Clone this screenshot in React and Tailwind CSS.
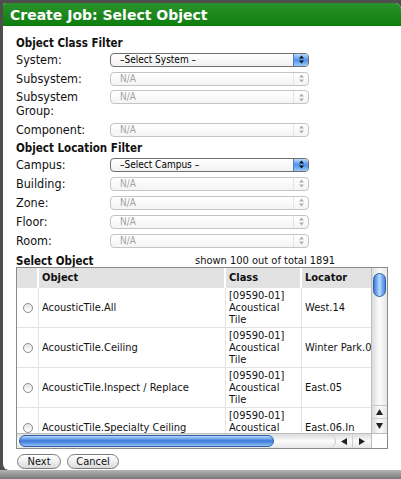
import React from 'react';

const sans = "font-['DejaVu_Sans_Condensed','DejaVu_Sans',sans-serif]";

const Arrows = ({ color = '#9a9a9a' }) => (
  <svg width="5" height="9" viewBox="0 0 5 9">
    <polygon points="0,3.5 2.5,0.5 5,3.5" fill={color} />
    <polygon points="0,5.5 2.5,8.5 5,5.5" fill={color} />
  </svg>
);

const Select = ({ value, active }) => (
  <div
    className={
      active
        ? 'h-[14px] w-[199px] shrink-0 rounded-[4px] border border-[#6f6f6f] bg-gradient-to-b from-white to-[#f1f1f1] flex items-center overflow-hidden text-black'
        : 'h-[14px] w-[199px] shrink-0 rounded-[4px] border border-[#c4c4c4] bg-gradient-to-b from-white to-[#f4f4f4] flex items-center overflow-hidden text-[#a2a2a2]'
    }
  >
    <span className="flex-1 pl-[9px] text-[10px] leading-none">{value}</span>
    {active ? (
      <div className="w-[15px] h-full border-l border-[#4a7fc8] bg-gradient-to-b from-[#b9dafc] via-[#4d92ea] to-[#9cc9f8] flex items-center justify-center">
        <Arrows color="#111" />
      </div>
    ) : (
      <div className="w-[15px] h-full border-l border-[#e4e4e4] flex items-center justify-center">
        <Arrows color="#b0b0b0" />
      </div>
    )}
  </div>
);

const FieldRow = ({ label, value, active }) => (
  <div className="h-[19px] flex items-center">
    <span className="w-[94px] text-[12.5px] leading-[14px] text-[#111]">{label}</span>
    <Select value={value} active={active} />
  </div>
);

const Heading = ({ children, className = '' }) => (
  <div className={`text-[11.5px] font-bold leading-[14px] text-[#111] ${className}`}>{children}</div>
);

const Radio = () => (
  <span className="block w-[10px] h-[10px] rounded-full border border-[#8c8c8c] bg-gradient-to-b from-[#e4e4e4] to-white" />
);

const rows = [
  { object: 'AcousticTile.All', locator: 'West.14' },
  { object: 'AcousticTile.Ceiling', locator: 'Winter Park.01' },
  { object: 'AcousticTile.Inspect / Replace', locator: 'East.05' },
  { object: 'AcousticTile.Specialty Ceiling', locator: 'East.06.In' },
];

const VScrollbar = () => (
  <div className="w-[16px] h-full border-l border-[#bdbdbd] bg-gradient-to-r from-[#dcdcdc] via-[#fbfbfb] to-[#e6e6e6] flex flex-col">
    <div className="px-[1px] pt-[5px]">
      <div className="h-[24px] w-[13px] rounded-full border border-[#2f5fa8] bg-gradient-to-r from-[#3b78d8] via-[#b6dafd] to-[#3f82e2]" />
    </div>
    <div className="flex-1" />
    <div className="h-[1px] bg-[#c8c8c8]" />
    <div className="h-[13px] flex items-center justify-center border-b border-[#d0d0d0]">
      <svg width="7" height="6" viewBox="0 0 7 6"><polygon points="0,6 3.5,0 7,6" fill="#222" /></svg>
    </div>
    <div className="h-[14px] flex items-center justify-center">
      <svg width="7" height="6" viewBox="0 0 7 6"><polygon points="0,0 3.5,6 7,0" fill="#222" /></svg>
    </div>
  </div>
);

const HScrollbar = () => (
  <div className="h-[15px] flex border-t border-[#bdbdbd]">
    <div className="flex-1 flex bg-gradient-to-b from-[#dcdcdc] via-[#fbfbfb] to-[#e6e6e6]">
      <div className="flex-1 flex items-center pl-[2px] border-r border-[#c8c8c8] rounded-r-full">
        <div className="h-[12px] w-[255px] rounded-full border border-[#2f5fa8] bg-gradient-to-b from-[#b6dafd] via-[#3b78d8] to-[#8fc0f7]" />
      </div>
      <div className="w-[17px] flex items-center justify-center border-r border-[#d0d0d0]">
        <svg width="6" height="7" viewBox="0 0 6 7"><polygon points="6,0 0,3.5 6,7" fill="#222" /></svg>
      </div>
      <div className="w-[18px] flex items-center justify-center">
        <svg width="6" height="7" viewBox="0 0 6 7"><polygon points="0,0 6,3.5 0,7" fill="#222" /></svg>
      </div>
    </div>
    <div className="w-[16px] bg-white border-l border-[#bdbdbd]" />
  </div>
);

const ObjectTable = () => (
  <div className="h-[182px] border border-[#8a8a8a] flex flex-col">
    <div className="h-[165px] flex overflow-hidden">
      <div className="flex-1 overflow-hidden">
        <div className="h-[20px] flex bg-[#e2e2e2] text-[11px] font-bold leading-[20px] text-[#111]">
          <div className="w-[22px] border-r-2 border-white" />
          <div className="w-[187px] border-r-2 border-white pl-[3px]">Object</div>
          <div className="w-[76px] border-r-2 border-white pl-[3px]">Class</div>
          <div className="flex-1 pl-[3px]">Locator</div>
        </div>
        {rows.map((r) => (
          <div key={r.object} className="h-[40px] flex border-b border-[#e4e4e4] text-[11px] text-[#111]">
            <div className="w-[22px] border-r border-[#e4e4e4] flex items-center justify-center">
              <Radio />
            </div>
            <div className="w-[187px] border-r border-[#e4e4e4] pl-[3px] flex items-center leading-[12px]">{r.object}</div>
            <div className="w-[76px] border-r border-[#e4e4e4] pl-[3px] pt-[2px] leading-[12px]">
              <div>[09590-01]</div>
              <div>Acoustical</div>
              <div>Tile</div>
            </div>
            <div className="flex-1 pl-[3px] flex items-center leading-[12px] whitespace-nowrap overflow-hidden">{r.locator}</div>
          </div>
        ))}
      </div>
      <VScrollbar />
    </div>
    <HScrollbar />
  </div>
);

const Button = ({ children, w }) => (
  <button
    className={`${w} h-[15px] rounded-full border border-[#7d7d7d] bg-gradient-to-b from-white via-[#f0f0f0] to-[#dadada] text-[11px] leading-none text-[#111]`}
  >
    {children}
  </button>
);

export default function App() {
  return (
    <div className={`w-[401px] h-[479px] overflow-hidden bg-[#4e4e4e] flex flex-col ${sans}`}>
      <div className="pl-[3px] pt-[3px]">
        <div className="h-[467px] bg-white rounded-tl-[3px] rounded-tr-[6px] rounded-bl-[6px] overflow-hidden flex flex-col">
          <div className="h-[23px] shrink-0 bg-gradient-to-b from-[#2a922a] to-[#0c7d0c] flex items-center pl-[7px]">
            <span className="font-['DejaVu_Sans',sans-serif] text-[14px] font-bold text-white leading-none">
              Create Job: Select Object
            </span>
          </div>
          <div className="px-[13px] pt-[10px] flex flex-col">
            <Heading>Object Class Filter</Heading>
            <FieldRow label="System:" value="–Select System –" active />
            <FieldRow label="Subsystem:" value="N/A" />
            <div className="h-[32px] flex items-start pt-[2px]">
              <span className="w-[94px] text-[12.5px] leading-[14px] text-[#111]">
                Subsystem
                <br />
                Group:
              </span>
              <Select value="N/A" />
            </div>
            <FieldRow label="Component:" value="N/A" />
            <Heading className="h-[16px] pt-[2px]">Object Location Filter</Heading>
            <FieldRow label="Campus:" value="–Select Campus –" active />
            <FieldRow label="Building:" value="N/A" />
            <FieldRow label="Zone:" value="N/A" />
            <FieldRow label="Floor:" value="N/A" />
            <FieldRow label="Room:" value="N/A" />
            <div className="h-[17px] pt-[4px] flex items-start">
              <Heading className="w-[179px] leading-[13px]">Select Object</Heading>
              <span className="text-[11px] leading-[13px] text-[#111]">shown 100 out of total 1891</span>
            </div>
            <ObjectTable />
            <div className="flex gap-[6px] pt-[5px] pl-[1px]">
              <Button w="w-[44px]">Next</Button>
              <Button w="w-[52px]">Cancel</Button>
            </div>
          </div>
        </div>
      </div>
      <div className="flex-1 bg-gradient-to-b from-[#b4b4b4] to-[#7a7a7a]" />
    </div>
  );
}
